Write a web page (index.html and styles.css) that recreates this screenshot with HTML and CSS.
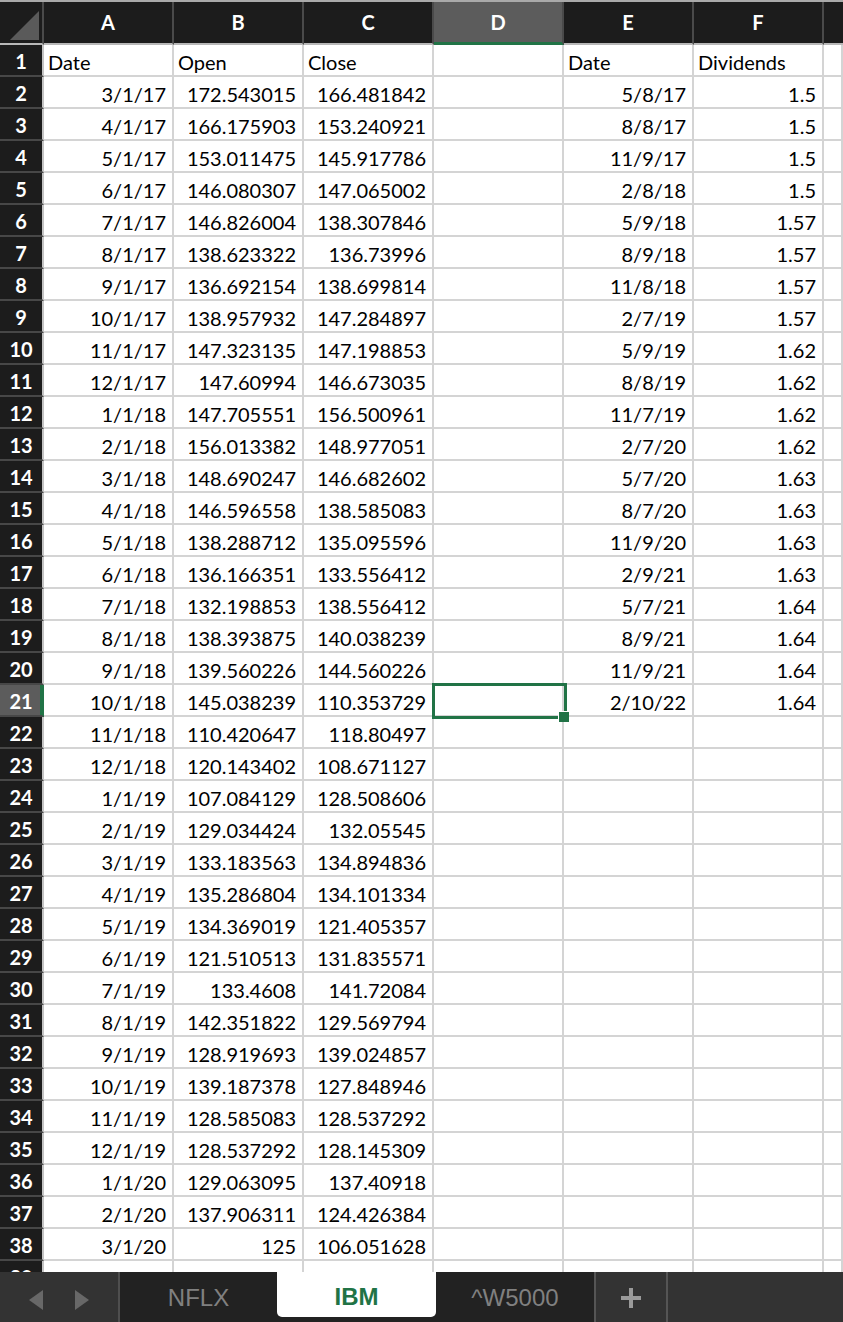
FILE: index.html
```html
<!DOCTYPE html>
<html>
<head>
<meta charset="utf-8">
<link rel="stylesheet" href="styles.css">
</head>
<body>
<div class="sheet">
  <div class="grid">
    <div class="corner"><svg width="42" height="41" viewBox="0 0 42 41"><polygon points="10,38 39,9 39,38" fill="#5a5a5a"/></svg></div>
    <div class="ch">A</div><div class="ch">B</div><div class="ch">C</div><div class="ch ch-sel">D</div><div class="ch">E</div><div class="ch">F</div><div class="ch ch-last"></div>

    <div class="rh">1</div><div class="c">Date</div><div class="c">Open</div><div class="c">Close</div><div class="c"></div><div class="c">Date</div><div class="c">Dividends</div><div class="c"></div>
    <div class="rh">2</div><div class="c n">3/1/17</div><div class="c n">172.543015</div><div class="c n">166.481842</div><div class="c"></div><div class="c n">5/8/17</div><div class="c n">1.5</div><div class="c"></div>
    <div class="rh">3</div><div class="c n">4/1/17</div><div class="c n">166.175903</div><div class="c n">153.240921</div><div class="c"></div><div class="c n">8/8/17</div><div class="c n">1.5</div><div class="c"></div>
    <div class="rh">4</div><div class="c n">5/1/17</div><div class="c n">153.011475</div><div class="c n">145.917786</div><div class="c"></div><div class="c n">11/9/17</div><div class="c n">1.5</div><div class="c"></div>
    <div class="rh">5</div><div class="c n">6/1/17</div><div class="c n">146.080307</div><div class="c n">147.065002</div><div class="c"></div><div class="c n">2/8/18</div><div class="c n">1.5</div><div class="c"></div>
    <div class="rh">6</div><div class="c n">7/1/17</div><div class="c n">146.826004</div><div class="c n">138.307846</div><div class="c"></div><div class="c n">5/9/18</div><div class="c n">1.57</div><div class="c"></div>
    <div class="rh">7</div><div class="c n">8/1/17</div><div class="c n">138.623322</div><div class="c n">136.73996</div><div class="c"></div><div class="c n">8/9/18</div><div class="c n">1.57</div><div class="c"></div>
    <div class="rh">8</div><div class="c n">9/1/17</div><div class="c n">136.692154</div><div class="c n">138.699814</div><div class="c"></div><div class="c n">11/8/18</div><div class="c n">1.57</div><div class="c"></div>
    <div class="rh">9</div><div class="c n">10/1/17</div><div class="c n">138.957932</div><div class="c n">147.284897</div><div class="c"></div><div class="c n">2/7/19</div><div class="c n">1.57</div><div class="c"></div>
    <div class="rh">10</div><div class="c n">11/1/17</div><div class="c n">147.323135</div><div class="c n">147.198853</div><div class="c"></div><div class="c n">5/9/19</div><div class="c n">1.62</div><div class="c"></div>
    <div class="rh">11</div><div class="c n">12/1/17</div><div class="c n">147.60994</div><div class="c n">146.673035</div><div class="c"></div><div class="c n">8/8/19</div><div class="c n">1.62</div><div class="c"></div>
    <div class="rh">12</div><div class="c n">1/1/18</div><div class="c n">147.705551</div><div class="c n">156.500961</div><div class="c"></div><div class="c n">11/7/19</div><div class="c n">1.62</div><div class="c"></div>
    <div class="rh">13</div><div class="c n">2/1/18</div><div class="c n">156.013382</div><div class="c n">148.977051</div><div class="c"></div><div class="c n">2/7/20</div><div class="c n">1.62</div><div class="c"></div>
    <div class="rh">14</div><div class="c n">3/1/18</div><div class="c n">148.690247</div><div class="c n">146.682602</div><div class="c"></div><div class="c n">5/7/20</div><div class="c n">1.63</div><div class="c"></div>
    <div class="rh">15</div><div class="c n">4/1/18</div><div class="c n">146.596558</div><div class="c n">138.585083</div><div class="c"></div><div class="c n">8/7/20</div><div class="c n">1.63</div><div class="c"></div>
    <div class="rh">16</div><div class="c n">5/1/18</div><div class="c n">138.288712</div><div class="c n">135.095596</div><div class="c"></div><div class="c n">11/9/20</div><div class="c n">1.63</div><div class="c"></div>
    <div class="rh">17</div><div class="c n">6/1/18</div><div class="c n">136.166351</div><div class="c n">133.556412</div><div class="c"></div><div class="c n">2/9/21</div><div class="c n">1.63</div><div class="c"></div>
    <div class="rh">18</div><div class="c n">7/1/18</div><div class="c n">132.198853</div><div class="c n">138.556412</div><div class="c"></div><div class="c n">5/7/21</div><div class="c n">1.64</div><div class="c"></div>
    <div class="rh">19</div><div class="c n">8/1/18</div><div class="c n">138.393875</div><div class="c n">140.038239</div><div class="c"></div><div class="c n">8/9/21</div><div class="c n">1.64</div><div class="c"></div>
    <div class="rh">20</div><div class="c n">9/1/18</div><div class="c n">139.560226</div><div class="c n">144.560226</div><div class="c"></div><div class="c n">11/9/21</div><div class="c n">1.64</div><div class="c"></div>
    <div class="rh rh-sel">21</div><div class="c n">10/1/18</div><div class="c n">145.038239</div><div class="c n">110.353729</div><div class="c active"><div class="selbox"></div><div class="handle"></div></div><div class="c n">2/10/22</div><div class="c n">1.64</div><div class="c"></div>
    <div class="rh">22</div><div class="c n">11/1/18</div><div class="c n">110.420647</div><div class="c n">118.80497</div><div class="c"></div><div class="c"></div><div class="c"></div><div class="c"></div>
    <div class="rh">23</div><div class="c n">12/1/18</div><div class="c n">120.143402</div><div class="c n">108.671127</div><div class="c"></div><div class="c"></div><div class="c"></div><div class="c"></div>
    <div class="rh">24</div><div class="c n">1/1/19</div><div class="c n">107.084129</div><div class="c n">128.508606</div><div class="c"></div><div class="c"></div><div class="c"></div><div class="c"></div>
    <div class="rh">25</div><div class="c n">2/1/19</div><div class="c n">129.034424</div><div class="c n">132.05545</div><div class="c"></div><div class="c"></div><div class="c"></div><div class="c"></div>
    <div class="rh">26</div><div class="c n">3/1/19</div><div class="c n">133.183563</div><div class="c n">134.894836</div><div class="c"></div><div class="c"></div><div class="c"></div><div class="c"></div>
    <div class="rh">27</div><div class="c n">4/1/19</div><div class="c n">135.286804</div><div class="c n">134.101334</div><div class="c"></div><div class="c"></div><div class="c"></div><div class="c"></div>
    <div class="rh">28</div><div class="c n">5/1/19</div><div class="c n">134.369019</div><div class="c n">121.405357</div><div class="c"></div><div class="c"></div><div class="c"></div><div class="c"></div>
    <div class="rh">29</div><div class="c n">6/1/19</div><div class="c n">121.510513</div><div class="c n">131.835571</div><div class="c"></div><div class="c"></div><div class="c"></div><div class="c"></div>
    <div class="rh">30</div><div class="c n">7/1/19</div><div class="c n">133.4608</div><div class="c n">141.72084</div><div class="c"></div><div class="c"></div><div class="c"></div><div class="c"></div>
    <div class="rh">31</div><div class="c n">8/1/19</div><div class="c n">142.351822</div><div class="c n">129.569794</div><div class="c"></div><div class="c"></div><div class="c"></div><div class="c"></div>
    <div class="rh">32</div><div class="c n">9/1/19</div><div class="c n">128.919693</div><div class="c n">139.024857</div><div class="c"></div><div class="c"></div><div class="c"></div><div class="c"></div>
    <div class="rh">33</div><div class="c n">10/1/19</div><div class="c n">139.187378</div><div class="c n">127.848946</div><div class="c"></div><div class="c"></div><div class="c"></div><div class="c"></div>
    <div class="rh">34</div><div class="c n">11/1/19</div><div class="c n">128.585083</div><div class="c n">128.537292</div><div class="c"></div><div class="c"></div><div class="c"></div><div class="c"></div>
    <div class="rh">35</div><div class="c n">12/1/19</div><div class="c n">128.537292</div><div class="c n">128.145309</div><div class="c"></div><div class="c"></div><div class="c"></div><div class="c"></div>
    <div class="rh">36</div><div class="c n">1/1/20</div><div class="c n">129.063095</div><div class="c n">137.40918</div><div class="c"></div><div class="c"></div><div class="c"></div><div class="c"></div>
    <div class="rh">37</div><div class="c n">2/1/20</div><div class="c n">137.906311</div><div class="c n">124.426384</div><div class="c"></div><div class="c"></div><div class="c"></div><div class="c"></div>
    <div class="rh">38</div><div class="c n">3/1/20</div><div class="c n">125</div><div class="c n">106.051628</div><div class="c"></div><div class="c"></div><div class="c"></div><div class="c"></div>
    <div class="rh">39</div><div class="c n">4/1/20</div><div class="c n">101.633003</div><div class="c n">120.688309</div><div class="c"></div><div class="c"></div><div class="c"></div><div class="c"></div>
  </div>
</div>
<div class="tabbar">
  <div class="nav">
    <svg width="118" height="50" viewBox="0 0 118 50"><polygon points="43,18 43,38 29,28" fill="#686868"/><polygon points="75,18 75,38 89,28" fill="#686868"/></svg>
  </div>
  <div class="tabs">
    <div class="tab tab-nflx">NFLX</div>
    <div class="tab tab-active">IBM</div>
    <div class="tab tab-w">^W5000</div>
  </div>
  <div class="add">
    <svg width="20" height="20" viewBox="0 0 20 20"><rect x="8" y="0" width="4" height="20" fill="#9a9a9a"/><rect x="0" y="8" width="20" height="4" fill="#9a9a9a"/></svg>
  </div>
  <div class="rest"></div>
</div>
</body>
</html>
```

FILE: styles.css
```css
html, body {
  margin: 0;
  padding: 0;
  background: #ffffff;
}
body {
  width: 843px;
  height: 1322px;
  overflow: hidden;
  font-family: "Lato", "Open Sans", sans-serif;
}
.sheet {
  height: 1272px;
  overflow: hidden;
  border-top: 2px solid #a9a9a9;
  box-sizing: border-box;
}
.grid {
  display: grid;
  grid-template-columns: 44px repeat(6, 130px) 1fr;
  grid-template-rows: 43px;
  grid-auto-rows: 32px;
}
.corner {
  background: #1c1c1c;
  border-right: 2px solid #4a4a4a;
  border-bottom: 2px solid #b8b8b8;
}
.corner svg { display: block; }
.ch {
  background: #1c1c1c;
  color: #ffffff;
  font-weight: 700;
  font-size: 20px;
  display: flex;
  align-items: center;
  justify-content: center;
  border-right: 2px solid #4a4a4a;
  border-bottom: 2px solid #b8b8b8;
  padding-bottom: 2px;
}
.ch-last { border-right: none; }
.ch-sel {
  background: #5c5c5c;
  border-bottom-color: #217346;
  box-shadow: inset 0 -1px 0 #217346;
}
.rh {
  background: #1c1c1c;
  color: #ffffff;
  font-weight: 700;
  font-size: 20px;
  display: flex;
  align-items: center;
  justify-content: center;
  border-right: 2px solid #c4c4c4;
  border-bottom: 2px solid #474747;
  padding-top: 2px;
  box-sizing: border-box;
}
.rh-sel {
  background: #5c5c5c;
  border-right-color: #217346;
  box-shadow: inset -2px 0 0 #217346;
}
.c {
  border-right: 2px solid #d4d4d4;
  border-bottom: 2px solid #d4d4d4;
  font-size: 20px;
  line-height: 30px;
  color: #000000;
  padding: 2px 6px 0 4px;
  box-sizing: border-box;
  white-space: nowrap;
  overflow: hidden;
}
.n { text-align: right; }
.active {
  position: relative;
  overflow: visible;
}
.selbox {
  position: absolute;
  left: -2px;
  top: -2px;
  width: 135px;
  height: 36px;
  border: 3px solid #217346;
  box-sizing: border-box;
  z-index: 2;
}
.handle {
  position: absolute;
  left: 124px;
  top: 26px;
  width: 10px;
  height: 10px;
  background: #217346;
  border-left: 1px solid #ffffff;
  border-top: 1px solid #ffffff;
  z-index: 3;
}
.tabbar {
  height: 50px;
  display: flex;
  background: #333333;
  font-family: "Liberation Sans", Arial, sans-serif;
}
.nav {
  width: 118px;
  border-right: 2px solid #4e4e4e;
  background: #333333;
}
.nav svg { display: block; }
.tabs {
  display: flex;
  background: #222222;
  border-right: 2px solid #555555;
}
.tab {
  height: 50px;
  display: flex;
  align-items: center;
  justify-content: center;
  font-size: 24px;
  color: #808080;
  box-sizing: border-box;
  padding-top: 2px;
}
.tab-nflx { width: 157px; }
.tab-w { width: 158px; }
.tab-active {
  width: 159px;
  height: 45px;
  padding-top: 5px;
  background: #ffffff;
  color: #217346;
  font-weight: 700;
  border-radius: 0 0 5px 5px;
}
.add {
  width: 72px;
  border-right: 2px solid #555555;
  display: flex;
  align-items: center;
  justify-content: center;
  padding-top: 2px;
  box-sizing: border-box;
}
.add svg { display: block; }
.rest { flex: 1; }
```
